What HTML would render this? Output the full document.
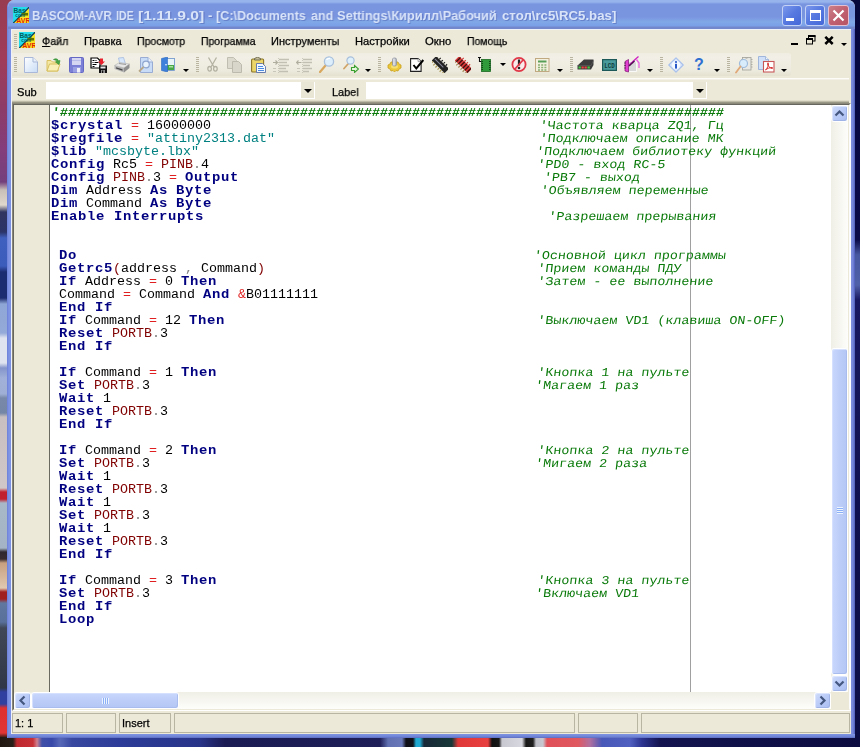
<!DOCTYPE html>
<html><head><meta charset="utf-8"><title>BASCOM-AVR IDE</title>
<style>
html,body{margin:0;padding:0}
body{width:860px;height:747px;position:relative;overflow:hidden;background:#16145a;font-family:"Liberation Sans",sans-serif;font-size:11px;color:#000}
.abs{position:absolute}
#deskL{left:0;top:0;width:18px;height:747px;background:linear-gradient(to bottom,#983c50 0,#a03c5a 60px,#8c3c68 110px,#843e7c 150px,#74407c 182px,#c8c0b8 190px,#e0d8cc 205px,#303460 212px,#2c3468 232px,#4060c0 238px,#3c5cbc 266px,#1c2c70 272px,#1c2c70 298px,#8ea6d6 304px,#94aad8 333px,#dfe3ef 338px,#dfe3ef 363px,#8494ca 368px,#a0b0d8 378px,#9eaed4 394px,#7888a8 398px,#7486a6 413px,#c8c0c0 417px,#d0c8c8 488px,#c02030 492px,#c02030 499px,#a8b8c8 503px,#a4b4c6 548px,#302830 552px,#382c30 559px,#c8a080 563px,#e0c8b0 588px,#a02020 592px,#a02020 599px,#6078a0 603px,#58709a 622px,#404858 628px,#303848 688px,#3040a0 692px,#3040a0 704px,#e03030 708px,#e03434 733px,#201810 738px)}
#deskB{left:0;top:737px;width:860px;height:10px;background:linear-gradient(to right,#201810 0,#282018 13px,#c02830 17px,#c83038 33px,#d08090 37px,#4050a8 42px,#3848a8 52px,#5868b8 60px,#3848a0 72px,#2c3c98 120px,#283488 200px,#1c1c54 225px,#1e1e58 380px,#6070b0 388px,#6878b8 402px,#101018 406px,#101018 413px,#20a8d0 416px,#20a8d0 420px,#182838 424px,#183838 452px,#e03838 458px,#e84040 488px,#101010 492px,#181818 499px,#c8c8d0 502px,#d8d8e0 522px,#181818 526px,#202020 533px,#c0c0c8 536px,#c8c8d0 543px,#e05058 547px,#e05860 578px,#b070a0 590px,#4858b8 602px,#5060c0 630px,#2c3490 642px,#141450 660px,#0c0c40 860px)}
#deskR{left:844px;top:0;width:16px;height:747px;background:linear-gradient(to bottom,#06063c 0,#0a0a48 240px,#4858a0 255px,#5060a8 285px,#181860 300px,#101050 500px,#0c0c44 747px)}
#win{left:7px;top:0;width:847px;height:738px;background:#ece9d8;border-left:1px solid #7285dc;border-radius:7px 7px 0 0;overflow:hidden}
#tb{left:0;top:0;width:847px;height:29px;background:linear-gradient(to bottom,#98b4ec 0,#98b4ec 2px,#7a95e0 4px,#7a95e0 17px,#80a8e6 22px,#7ba0e8 25px,#7ba0e8 26px,#7388cc 27px,#7388cc 28px,#7388cc 29px)}
#bl{left:0;top:29px;width:4px;height:709px;background:linear-gradient(to right,#7a8ee0 0,#8196e6 2px,#7a8ee0 3px,#eef1f9 3px,#eef1f9 4px)}
#br{left:843px;top:29px;width:4px;height:709px;background:linear-gradient(to right,#8090e0,#7484d8 50%,#4c5cb8)}
#bb{left:0;top:734px;width:847px;height:4px;background:linear-gradient(to bottom,#8094e4,#7286d8 60%,#5a6cc0)}
.tw{will-change:transform;top:8px;margin-left:-1px;font:bold 13px/16px "Liberation Sans",sans-serif;color:#d9e4f9;white-space:pre;transform-origin:0 0;text-shadow:1px 1px 0 rgba(70,90,170,.45)}
.cap{top:5px;width:21px;height:21px;border-radius:3px;box-sizing:border-box;border:1px solid #e8eefa}
#client{left:4px;top:29px;width:839px;height:705px;background:#ece9d8}
.mi{-webkit-text-stroke:0.250px #000;will-change:transform;top:5px;white-space:pre;font-size:11px;line-height:13px;transform-origin:0 0}
.ln{position:absolute;left:0;white-space:pre;height:13px;font:12px/13px "Liberation Mono",monospace;letter-spacing:-0.001px;color:#000}
.k{font-weight:bold;color:#000080;font-size:12.500px;line-height:0;letter-spacing:0.599px}
.c{font-style:normal;display:inline-block;transform:skewX(-6deg);transform-origin:0 100%;color:#0a7a0a}
.h{font-weight:bold}
.s{color:#008080}
.r{color:#800000}
.o{color:#e02020}
.g{color:#808080}

.grip{width:3px;background:repeating-linear-gradient(to bottom,#b8b4a0 0,#b8b4a0 1px,transparent 1px,transparent 2px)}
.darr{width:0;height:0;border-left:3px solid transparent;border-right:3px solid transparent;border-top:3px solid #000}
.darr2{width:0;height:0;border-left:4px solid transparent;border-right:4px solid transparent;border-top:4.500px solid #000}
.sbtn{width:17px;height:17px;box-sizing:border-box;border:1px solid #fff;border-radius:3px;background:linear-gradient(135deg,#d0dcfb,#b9cbf7 50%,#a9bdf0);box-shadow:inset -1px -1px 0 #a0b4e8,inset 1px 1px 0 #dbe5fd}
.sthumb{box-sizing:border-box;border:1px solid #fff;border-radius:3px;background:linear-gradient(to bottom,#c9d7fc,#bccdf8 50%,#b4c6f4);box-shadow:inset -1px -1px 0 #a8bcee,inset 1px 1px 0 #d4e0fd}
.stv{background:linear-gradient(to right,#c9d7fc,#bccdf8 50%,#b4c6f4)}
.pane{top:2px;height:20px;box-sizing:border-box;border:1px solid #b9b5a3}
</style></head><body>
<div class="abs" id="deskL"></div><div class="abs" id="deskR"></div><div class="abs" id="deskB"></div>
<div class="abs" id="win">
<div class="abs" id="tb"></div>
<span class="abs tw" id="t1" style="left:24.5px;transform:scaleX(0.901)">BASCOM-AVR</span><span class="abs tw" id="t2" style="left:109.0px;transform:scaleX(0.821)">IDE</span><span class="abs tw" id="t3" style="left:130.5px;transform:scaleX(1.207)">[1.11.9.0]</span><span class="abs tw" id="t4" style="left:201.0px;transform:scaleX(0.991)">-</span><span class="abs tw" id="t5" style="left:208.5px;transform:scaleX(0.971)">[C:\Documents</span><span class="abs tw" id="t6" style="left:303.5px;transform:scaleX(0.964)">and</span><span class="abs tw" id="t7" style="left:330.0px;transform:scaleX(0.988)">Settings\Кирилл\Рабочий</span><span class="abs tw" id="t8" style="left:495.0px;transform:scaleX(1.017)">стол\rc5\RC5.bas]</span>
<!-- title icon -->
<svg class="abs" style="left:5px;top:7px" width="16" height="16" viewBox="0 0 17 17"><rect width="17" height="17" fill="#22dcec"/><polygon points="17,1 17,17 1,17" fill="#f8e424"/><polygon points="17,0 17,1.200 1.200,17 0,17 0,16.400 16.400,0" fill="#1c3a50"/><rect x="9" y="6.300" width="7" height="2.800" fill="#667200"/><text x="0.500" y="6" font-family="Liberation Sans,sans-serif" font-weight="bold" font-size="7" fill="#00605c">Bas</text><text x="2.500" y="10.500" font-family="Liberation Sans,sans-serif" font-weight="bold" font-size="5" fill="#00605c">com</text><text x="3.500" y="16.500" font-family="Liberation Sans,sans-serif" font-weight="bold" font-size="7.500" fill="#e42400">AVR</text></svg>
<!-- caption buttons -->
<div class="abs cap" style="left:774px;width:20px;border-color:#c4d2f6;background:linear-gradient(135deg,#7c98ec,#5578e0 50%,#4468d8)"><div class="abs" style="left:3px;top:12px;width:8px;height:3px;background:#fff"></div></div>
<div class="abs cap" style="left:797px;width:20px;border-color:#c4d2f6;background:linear-gradient(135deg,#7c98ec,#5578e0 50%,#4468d8)"><div class="abs" style="left:4px;top:4px;width:11px;height:11px;box-sizing:border-box;border:1px solid #fff;border-top-width:3px"></div></div>
<div class="abs cap" style="left:820px;border-color:#e4c0d0;background:linear-gradient(135deg,#cc8088,#c06070 50%,#b85464)"><svg class="abs" style="left:3px;top:3px" width="13" height="13" viewBox="0 0 13 13"><path d="M1.5 1.5L11.5 11.5M11.5 1.5L1.5 11.5" stroke="#fff" stroke-width="2.2"/></svg></div>
<div class="abs" id="bl"></div><div class="abs" id="br"></div><div class="abs" id="bb"></div>
<div class="abs" id="client">
<!-- white line under title -->
<div class="abs" style="left:0;top:0;width:839px;height:1px;background:#f0f2fa"></div>
<!-- menu bar : page y30-53 => client y1-24 -->
<div class="abs" id="menu" style="left:0;top:1px;width:839px;height:24px;background:#ece9d8">
 <div class="abs grip" style="left:2px;top:4px;height:15px"></div>
 <svg class="abs" style="left:7px;top:2px" width="16" height="16" viewBox="0 0 17 17"><rect width="17" height="17" fill="#22dcec"/><polygon points="17,1 17,17 1,17" fill="#f8e424"/><polygon points="17,0 17,1.200 1.200,17 0,17 0,16.400 16.400,0" fill="#1c3a50"/><rect x="9" y="6.300" width="7" height="2.800" fill="#667200"/><text x="0.500" y="6" font-family="Liberation Sans,sans-serif" font-weight="bold" font-size="7" fill="#00605c">Bas</text><text x="2.500" y="10.500" font-family="Liberation Sans,sans-serif" font-weight="bold" font-size="5" fill="#00605c">com</text><text x="3.500" y="16.500" font-family="Liberation Sans,sans-serif" font-weight="bold" font-size="7.500" fill="#e42400">AVR</text></svg>
 <span class="abs mi" id="m1" style="left:30.0px;transform:scaleX(0.972)"><u>Ф</u>айл</span>
 <span class="abs mi" id="m2" style="left:71.8px;transform:scaleX(1.017)">Правка</span>
 <span class="abs mi" id="m3" style="left:125.0px;transform:scaleX(0.961)">Просмотр</span>
 <span class="abs mi" id="m4" style="left:189.3px;transform:scaleX(0.946)">Программа</span>
 <span class="abs mi" id="m5" style="left:259.3px;transform:scaleX(0.996)">Инструменты</span>
 <span class="abs mi" id="m6" style="left:343.1px;transform:scaleX(1.016)">Настройки</span>
 <span class="abs mi" id="m7" style="left:413.3px;transform:scaleX(1.029)">Окно</span>
 <span class="abs mi" id="m8" style="left:455.0px;transform:scaleX(0.948)">Помощь</span>
 <!-- mdi buttons -->
 <div class="abs" style="left:779px;top:12.500px;width:7px;height:2.500px;background:#000"></div>
 <svg class="abs" style="left:794px;top:5px" width="10" height="10" viewBox="0 0 10 10"><rect x="2.500" y="1" width="6.500" height="5" fill="none" stroke="#000" stroke-width="1"/><rect x="2" y="0" width="7.500" height="2" fill="#000"/><rect x="0.500" y="4" width="6" height="5" fill="#ece9d8" stroke="#000" stroke-width="1"/><rect x="0" y="3" width="7" height="2" fill="#000"/></svg>
 <svg class="abs" style="left:812px;top:5.500px" width="10" height="9" viewBox="0 0 10 9"><path d="M1.300 0.800L8.700 8M8.700 0.800L1.300 8" stroke="#000" stroke-width="2.500"/></svg>
 <div class="abs darr" style="left:829px;top:13px"></div>
</div>
<!-- toolbar : page y54-79 => client y25-50 ; icons top page 57 => rel 3 -->
<div class="abs" id="tool" style="left:0;top:25px;width:839px;height:25px;background:#ece9d8">
<div class="abs" style="left:0;top:-1px;width:779px;height:23px;background:linear-gradient(to bottom,#f0eee3,#f2f0e6 20%,#edebde 75%,#e4e1d0);border-radius:0 3px 3px 0"></div>
<div class="abs grip" style="left:2px;top:3px;height:15px"></div>
<!-- new doc  page x24 -->
<svg class="abs" style="left:12px;top:3px" width="14" height="16" viewBox="0 0 14 16"><defs><linearGradient id="gd" x1="0" y1="0" x2="1" y2="1"><stop offset="0" stop-color="#fff"/><stop offset="1" stop-color="#c8dcf6"/></linearGradient></defs><path d="M0.5 0.5h8.5l4.5 4.5v10.500h-13z" fill="url(#gd)" stroke="#a9b8d8"/><path d="M9 0.500v4.500h4.500" fill="#e8f0fc" stroke="#a9b8d8"/></svg>
<!-- open folder page x46 -->
<svg class="abs" style="left:34px;top:3px" width="15" height="16" viewBox="0 0 15 16"><path d="M1 3.500h4l1.500 1.500h5.500v9h-11z" fill="#f4e8a4" stroke="#d8c060"/><path d="M1 14l2.500-7h10.500l-2.500 7z" fill="#f8f0b8" stroke="#d8c060"/><path d="M7.500 2.500c2.500-1.500 4.500-0.500 5 1.500l1.500-0.500-1 4-3.500-2.500 1.500-0.500c-0.500-1-1.500-1.500-3.500-2z" fill="#48a848" stroke="#2a8a2a" stroke-width=".6"/></svg>
<!-- save floppy page x69 -->
<svg class="abs" style="left:57px;top:3px" width="15" height="16" viewBox="0 0 15 16"><path d="M0.500 1.500q0-1 1-1h12q1 0 1 1v13q0 1-1 1h-12q-1 0-1-1z" fill="#7b7fd6" stroke="#6468c4"/><rect x="3" y="1" width="9" height="7" fill="#d4d6f2"/><rect x="3" y="3" width="9" height="1" fill="#b8bce8"/><rect x="4" y="10" width="8" height="5.500" fill="#9a9ee2"/><rect x="8" y="11" width="3" height="4.500" fill="#f0f0fa"/></svg>
<!-- save as page x90.5 -->
<svg class="abs" style="left:78px;top:3px" width="17" height="16" viewBox="0 0 17 16"><path d="M1 1h6.500l2.500 2.500v7.500h-9z" fill="#fff" stroke="#000" stroke-width="1.200"/><path d="M2.500 3.500h2M5.500 3.500h1M2.500 5.500h1M4.500 5.500h4M2.500 7.500h4M2.500 9.500h2" stroke="#000" stroke-width="1"/><path d="M10 1.500h3v3h2l-3.500 3.500-3.500-3.500h2z" fill="#e8202c"/><rect x="9" y="8.500" width="8" height="7.500" fill="#111"/><rect x="10.500" y="9.500" width="5" height="2" fill="#e8e8e8"/><rect x="11" y="13" width="4" height="3" fill="#909090"/><rect x="12" y="13.500" width="1.200" height="2.500" fill="#111"/></svg>
<!-- printer page x114 -->
<svg class="abs" style="left:102px;top:3px" width="16" height="16" viewBox="0 0 16 16"><path d="M4.500 1l5-0.500 2 6.500-5.500 0.500z" fill="#d6e6fb" stroke="#a4badf" stroke-width=".8"/><path d="M0.500 8.500l5-3 10 1.500-5.500 4z" fill="#e6e6e6" stroke="#b0b0b0" stroke-width=".6"/><path d="M0.500 8.500l9.500 2.500v4.500l-9.500-3.500z" fill="#b4b4b4"/><path d="M10 11l5.500-4v4l-5.500 4.500z" fill="#8e8e8e"/><path d="M2 10.300l6.500 1.900v1.600l-6.500-2.200z" fill="#4c4c4c"/><path d="M5 6.500l7 1" stroke="#9a9a9a" stroke-width="1"/></svg>
<!-- preview page x138 -->
<svg class="abs" style="left:126px;top:3px" width="15" height="16" viewBox="0 0 15 16"><path d="M2.500 0.500h7.500l4.500 4.500v10.500h-12z" fill="#c8dcf8" stroke="#98acd4"/><path d="M10 0.500v4.500h4.500" fill="#e8f0fc" stroke="#98acd4"/><circle cx="8" cy="7.500" r="3.300" fill="#e8f2fc" stroke="#8ea4cc" stroke-width="1.200"/><path d="M5.500 10l-4.500 4.500" stroke="#b8a888" stroke-width="1.800"/></svg>
<!-- exit door page x161 -->
<svg class="abs" style="left:149px;top:3px" width="14" height="15" viewBox="0 0 14 15"><rect x="5" y="1.500" width="8.500" height="12" fill="#e8f4f8" stroke="#6890c8" stroke-width=".8"/><rect x="5.500" y="8" width="7.500" height="5" fill="#48a848"/><rect x="8" y="9" width="4" height="1.500" fill="#a8e0a0"/><path d="M0.500 1.500l6-1.500v15l-6-1.500z" fill="#3c80dc" stroke="#2c68c0" stroke-width=".6"/><circle cx="5" cy="7.800" r=".8" fill="#fff"/></svg>
<div class="abs darr" style="left:171px;top:15px"></div>
<div class="abs grip" style="left:184px;top:3px;height:15px"></div>
<!-- scissors gray page x207.5 -->
<svg class="abs" style="left:195px;top:3px" width="11" height="15" viewBox="0 0 11 15"><path d="M1.500 0.500l5.500 9.500M9.500 0.500l-5.500 9.500" stroke="#b4b2a2" stroke-width="1.300" fill="none"/><ellipse cx="2.600" cy="11.800" rx="1.800" ry="2.300" fill="none" stroke="#b4b2a2" stroke-width="1.300"/><ellipse cx="8.400" cy="11.800" rx="1.800" ry="2.300" fill="none" stroke="#b4b2a2" stroke-width="1.300"/></svg>
<!-- copy gray page x227.5 -->
<svg class="abs" style="left:215px;top:3px" width="15" height="16" viewBox="0 0 15 16"><path d="M0.500 0.500h6l3 3v8h-9z" fill="#dcdace" stroke="#c0beb0"/><path d="M5.500 4.500h6l3 3v8h-9z" fill="#d8d6ca" stroke="#bcbaac"/></svg>
<!-- paste page x251 -->
<svg class="abs" style="left:239px;top:3px" width="15" height="16" viewBox="0 0 15 16"><rect x="0.600" y="2" width="12" height="13" rx="1" fill="#ecd66a" stroke="#8a7428" stroke-width="1.100"/><path d="M3.500 3v-1.500q3-2.500 6 0v1.500z" fill="#c8c0a0" stroke="#6a6448" stroke-width=".9"/><path d="M5.500 6.500h6l3 3v6h-9z" fill="#f4f8ff" stroke="#5a70a8" stroke-width=".9"/><path d="M7 9.500h5M7 11.500h6M7 13.500h6" stroke="#4a8ae0" stroke-width="1"/></svg>
<!-- indent page x273.5 gray -->
<svg class="abs" style="left:261px;top:4px" width="17" height="15" viewBox="0 0 17 15"><path d="M6 1.500h10M6 4.500h8M6 7.500h10M6 10.500h7M6 13.500h9" stroke="#c2c0b2" stroke-width="1.400"/><path d="M5.500 0v15" stroke="#c2c0b2" stroke-width=".8" stroke-dasharray="1 1"/><path d="M0 4.500h4M2.500 2.500l2 2-2 2" stroke="#b0ae9e" stroke-width="1.200" fill="none"/><path d="M0 10.500h3M0 13.500h3" stroke="#c8c6b8" stroke-width="1.200"/></svg>
<!-- unindent page x296 gray -->
<svg class="abs" style="left:284px;top:4px" width="17" height="15" viewBox="0 0 17 15"><path d="M7 1.500h9M7 4.500h9M7 7.500h7M7 10.500h9M7 13.500h6" stroke="#c2c0b2" stroke-width="1.400"/><path d="M6.500 0v15" stroke="#c2c0b2" stroke-width=".8" stroke-dasharray="1 1"/><path d="M0.500 4.500h5M2.500 2.500l-2 2 2 2" stroke="#b0ae9e" stroke-width="1.200" fill="none"/><path d="M1 10.500h3M1 13.500h3" stroke="#c8c6b8" stroke-width="1.200"/></svg>
<!-- find page x319 -->
<svg class="abs" style="left:307px;top:2px" width="16" height="17" viewBox="0 0 16 17"><path d="M6.500 9.500l-5.500 6.500" stroke="#d8a860" stroke-width="2.200" stroke-linecap="round"/><circle cx="10" cy="5.500" r="4.600" fill="#dceefb" stroke="#a8c0dc" stroke-width="1.300"/><path d="M7.500 4q1.500-2 3.500-1.500" stroke="#fff" stroke-width="1.200" fill="none"/></svg>
<!-- find next page x344 -->
<svg class="abs" style="left:331px;top:2px" width="16" height="17" viewBox="0 0 16 17"><path d="M5 8l-4 4.500" stroke="#d0a468" stroke-width="1.800" stroke-linecap="round"/><circle cx="7.500" cy="4.500" r="3.600" fill="#e0f0fb" stroke="#a8c0dc" stroke-width="1.200"/><path d="M8.500 11.500h3v-2l4 3.500-4 3.500v-2h-3z" fill="#e8f8e0" stroke="#3aa030" stroke-width="1.100"/></svg>
<div class="abs darr" style="left:353px;top:15px"></div>
<div class="abs grip" style="left:366px;top:3px;height:15px"></div>
<!-- gear page x387 -->
<svg class="abs" style="left:375px;top:3px" width="15" height="16" viewBox="0 0 15 16"><path d="M1 8l2-1 1-2h7l1 2 2 1v3l-2 1-1 2-2-0.500-1.500 1.500-1.500-1.500-2 0.500-1-2-2-1z" fill="#ecc838" stroke="#c8a020" stroke-width=".8"/><ellipse cx="7.500" cy="9.500" rx="3.500" ry="2" fill="#f8e070"/><rect x="5.500" y="1" width="4" height="8" rx="1.500" fill="#b8bcc4" stroke="#888c98" stroke-width=".7"/><rect x="6.300" y="1.500" width="1.300" height="7" fill="#e8eaf0"/></svg>
<!-- check doc page x410 -->
<svg class="abs" style="left:398px;top:4px" width="15" height="14" viewBox="0 0 15 14"><path d="M0.600 0.600h7.500l3 3v9.800h-10.500z" fill="#fff" stroke="#222" stroke-width="1.100"/><path d="M8 0.600v3h3" fill="#e8e8f0" stroke="#888" stroke-width=".7"/><path d="M3.500 7l2.800 3.500l7-8.500" fill="none" stroke="#000" stroke-width="2"/></svg>
<!-- black chip page x432 -->
<svg class="abs" style="left:420px;top:3px" width="16" height="16" viewBox="0 0 16 16"><g transform="rotate(45 8 8)"><rect x="-1" y="4.500" width="18" height="6" fill="#222"/><path d="M0.500 2.500v2M3.500 2.500v2M6.500 2.500v2M9.500 2.500v2M12.500 2.500v2M15.500 2.500v2" stroke="#222" stroke-width="1.200"/><path d="M0.500 10.500v2.500M3.500 10.500v2.500M6.500 10.500v2.500M9.500 10.500v2.500M12.500 10.500v2.500M15.500 10.500v2.500" stroke="#a89858" stroke-width="1.200"/><rect x="0" y="6.800" width="12" height="1" fill="#8888a0"/></g></svg>
<!-- red chip page x455.5 -->
<svg class="abs" style="left:443px;top:3px" width="16" height="16" viewBox="0 0 16 16"><g transform="rotate(45 8 8)"><rect x="-1" y="4.500" width="18" height="6" fill="#d83838"/><path d="M1 4.500v6M4 4.500v6M7 4.500v6M10 4.500v6M13 4.500v6M16 4.500v6" stroke="#401010" stroke-width="1.300"/><path d="M0.500 2.500v2M3.500 2.500v2M6.500 2.500v2M9.500 2.500v2M12.500 2.500v2M15.500 2.500v2" stroke="#d83838" stroke-width="1.200"/><path d="M0.500 10.500v2.500M3.500 10.500v2.500M6.500 10.500v2.500M9.500 10.500v2.500M12.500 10.500v2.500M15.500 10.500v2.500" stroke="#a88858" stroke-width="1.200"/></g></svg>
<!-- green chip page x478 -->
<svg class="abs" style="left:466px;top:3px" width="13" height="15" viewBox="0 0 13 15"><path d="M0 0.500h3M1.500 0.500v4h2" stroke="#111" stroke-width="1.100" fill="none"/><rect x="3.500" y="2.500" width="9" height="12" fill="#2f9a3a" stroke="#1c6a24" stroke-width=".8"/><path d="M3.500 4.500h1.500M3.500 6.500h1.500M3.500 8.500h1.500M3.500 10.500h1.500M3.500 12.500h1.500M11 4.500h1.500M11 6.500h1.500M11 8.500h1.500M11 10.500h1.500M11 12.500h1.500" stroke="#0c3c10" stroke-width=".9"/></svg>
<div class="abs darr" style="left:488px;top:9px"></div>
<!-- stop page x511 -->
<svg class="abs" style="left:499px;top:2px" width="16" height="17" viewBox="0 0 16 17"><circle cx="8" cy="8.500" r="6.600" fill="#fbeaea" stroke="#e03848" stroke-width="1.800"/><path d="M8 3.500v6" stroke="#222" stroke-width="2.200"/><circle cx="8" cy="12" r="1.300" fill="#222"/><path d="M12.500 3.500l-9 10" stroke="#e03848" stroke-width="1.800"/></svg>
<!-- calculator page x535 -->
<svg class="abs" style="left:523px;top:4px" width="15" height="14" viewBox="0 0 15 14"><rect x="0.500" y="0.500" width="13.500" height="13" fill="#f4f0e0" stroke="#c0a880" stroke-width="1"/><rect x="3" y="2.500" width="8.500" height="2" fill="#58a058"/><path d="M3 7h8.500M3 9.500h8.500M3 12h8.500" stroke="#88b070" stroke-width="1.600" stroke-dasharray="2 1.200"/></svg>
<div class="abs darr" style="left:545px;top:15px"></div>
<div class="abs grip" style="left:558px;top:3px;height:15px"></div>
<!-- modem page x577.5 y59-69 -->
<svg class="abs" style="left:565px;top:5px" width="17" height="11" viewBox="0 0 17 11"><path d="M0.500 6.500l6.500-6h9.500v5.500l-2.500 4.500h-13.500z" fill="#3c3c3c"/><path d="M0.500 6.500h13.500l2.500-5" stroke="#606060" stroke-width=".6" fill="none"/><rect x="1.500" y="7.500" width="2.300" height="2" fill="#40d040"/><rect x="4.500" y="7.500" width="2.300" height="2" fill="#f04040"/><rect x="7.500" y="7.500" width="2.300" height="2" fill="#f04040"/><rect x="10.500" y="7.500" width="2.300" height="2" fill="#40d040"/></svg>
<!-- LCD page x602 y59-71 -->
<svg class="abs" style="left:590px;top:5px" width="15" height="12" viewBox="0 0 15 12"><rect x="0.600" y="0.600" width="13.800" height="10.800" fill="#4a9c9c" stroke="#1c5858" stroke-width="1.200"/><text x="2.200" y="8.800" font-family="Liberation Mono,monospace" font-weight="bold" font-size="6.500" fill="#103c3c" textLength="10.500" lengthAdjust="spacingAndGlyphs">LCD</text></svg>
<!-- magenta tool page x624 -->
<svg class="abs" style="left:612px;top:2px" width="17" height="17" viewBox="0 0 17 17"><path d="M3 5l9.500 1v9.500h-9.500z" fill="#d8d8d8" stroke="#fff" stroke-width=".8"/><path d="M1 5.500l3.500-2v12.500l-3.500-1z" fill="#e040d0" stroke="#801070" stroke-width=".7"/><path d="M0.500 7h1M0.500 9.500h1M0.500 12h1" stroke="#222" stroke-width="1.200"/><path d="M4.500 9.500l5.500-5 4.500-4" stroke="#d020c0" stroke-width="1.300"/><path d="M5 10l5.500-5" stroke="#501050" stroke-width="1.500"/><path d="M12.500 3.500l2.500 3.500v5" stroke="#e860e0" stroke-width="1.300" fill="none"/></svg>
<div class="abs darr" style="left:635px;top:15px"></div>
<div class="abs grip" style="left:648px;top:3px;height:15px"></div>
<!-- info page x668.5 -->
<svg class="abs" style="left:656px;top:3px" width="16" height="16" viewBox="0 0 16 16"><path d="M8 0.800l7.200 7.200-7.200 7.200-7.200-7.200z" fill="#dbe7fb" stroke="#a8c0ec" stroke-width="1.200" stroke-linejoin="round"/><circle cx="8" cy="8" r="4.200" fill="#f4f8ff"/><circle cx="8" cy="5" r="1.100" fill="#2858c8"/><rect x="7" y="6.800" width="2" height="4.800" fill="#2858c8"/></svg>
<!-- ? page x694.5 -->
<div class="abs" style="left:682px;top:2px;font:bold 16px/18px 'Liberation Sans',sans-serif;color:#2f6fd2">?</div>
<div class="abs darr" style="left:702px;top:15px"></div>
<div class="abs grip" style="left:715px;top:3px;height:15px"></div>
<!-- chip search page x735 -->
<svg class="abs" style="left:723px;top:2px" width="18" height="18" viewBox="0 0 18 18"><rect x="7.500" y="1.500" width="8.500" height="12.500" fill="#e8e8e4" stroke="#a8a8a0" stroke-width=".9"/><path d="M16 3.500h1.500M16 6h1.500M16 8.500h1.500M16 11h1.500M6 3.500h1.500M10 1.500q1.500 1.500 3 0" stroke="#a8a8a0" stroke-width=".9" fill="none"/><circle cx="8.500" cy="7.500" r="4" fill="#d8ecfb" stroke="#a0bcdc" stroke-width="1.200"/><path d="M5.500 10.500l-4.500 6" stroke="#e0a878" stroke-width="1.800" stroke-linecap="round"/></svg>
<!-- pdf page x758 -->
<svg class="abs" style="left:746px;top:2px" width="17" height="17" viewBox="0 0 17 17"><path d="M0.500 0.500h7l3 3v10h-10z" fill="#cfe0f8" stroke="#98b0d8" stroke-width=".9"/><path d="M7.500 0.500v3h3" fill="#eef4fc" stroke="#98b0d8" stroke-width=".8"/><rect x="5.500" y="5.500" width="10.500" height="10.500" fill="#fff" stroke="#c85858" stroke-width="1.100"/><path d="M7.500 14c2-2 3-4.500 3-6.500c0-1-1-1-1 0c0 2 2 4.500 4.500 5c1 0 1-1 0-1c-2 0-5 1-6.500 2.500z" fill="none" stroke="#d83030" stroke-width="1"/></svg>
<div class="abs darr" style="left:769px;top:15px"></div>
</div>

<!-- sub/label row : page y78-103 => client y49-74 -->
<div class="abs" id="subrow" style="left:0;top:49px;width:837px;height:25px;background:linear-gradient(to bottom,#fdfcf9 0,#fdfcf9 1px,#f3f1e7 1px,#f3f1e7 2px,#ece9d8 2px,#ece9d8 22px,#d4d0bc 23px,#a8a594 24px,#8a8878 25px)">
 <span class="abs" id="lsub" style="-webkit-text-stroke:0.250px #000;will-change:transform;left:5px;top:8px;font-size:11px;line-height:13px;transform-origin:0 0;transform:scaleX(1.01)">Sub</span>
 <div class="abs" style="left:34px;top:4px;width:269px;height:17px;background:#fff"></div>
 <div class="abs" style="left:289px;top:4px;width:13px;height:16px;background:#e9e6d6"><div class="abs darr2" style="left:2.500px;top:6.500px"></div></div>
 <span class="abs" id="llab" style="-webkit-text-stroke:0.250px #000;will-change:transform;left:320px;top:8px;font-size:11px;line-height:13px;transform-origin:0 0;transform:scaleX(0.99)">Label</span>
 <div class="abs" style="left:354px;top:4px;width:341px;height:17px;background:#fff"></div>
 <div class="abs" style="left:681px;top:4px;width:13px;height:16px;background:#e9e6d6"><div class="abs darr2" style="left:2.500px;top:6.500px"></div></div>
</div>
<!-- editor : page x12-851 y103-711 => client x0-839 y74-682 -->
<div class="abs" id="ed" style="left:0;top:74px;width:839px;height:608px;box-sizing:border-box;border:1px solid #8a8878;border-right-color:#fff;border-bottom-color:#fff;background:#ece9d8">
 <div class="abs" style="left:0;top:0;width:837px;height:606px;box-sizing:border-box;border:1px solid #66665e;border-right-color:#fbfbfd;border-bottom-color:#ece9d8"></div>
 <!-- gutter page x14-49 ; inner origin = page (13,104) -->
 <div class="abs" style="left:1px;top:1px;width:35px;height:587px;background:#ece9d8"></div>
 <div class="abs" style="left:36px;top:1px;width:1px;height:587px;background:#6a6a60"></div>
 <div class="abs" id="text" style="left:37px;top:1px;width:781px;height:587px;background:#fff;overflow:hidden">
  <div class="abs" style="left:640px;top:0;width:1px;height:587px;background:#a0a0a0"></div>
  <div class="abs" id="code" style="left:1px;top:2px;will-change:transform;transform:scaleX(1.11094);transform-origin:0 0">
<div class="ln" style="top:0px"><span class="c h">'###################################################################################</span></div>
<div class="ln" style="top:13px"><span class="k">$crystal</span> <span class="o">=</span> 16000000                                         <span class="c">'Частота кварца ZQ1, Гц</span></div>
<div class="ln" style="top:26px"><span class="k">$regfile</span> <span class="o">=</span> <span class="s">"attiny2313.dat"</span>                                 <span class="c">'Подключаем описание МК</span></div>
<div class="ln" style="top:39px"><span class="k">$lib</span> <span class="s">"mcsbyte.lbx"</span>                                          <span class="c">'Подключаем библиотеку функций</span></div>
<div class="ln" style="top:52px"><span class="k">Config</span> Rc5 <span class="o">=</span> <span class="r">PINB</span><span class="g">.</span>4                                         <span class="c">'PD0 - вход RC-5</span></div>
<div class="ln" style="top:65px"><span class="k">Config</span> <span class="r">PINB</span><span class="g">.</span>3 <span class="o">=</span> <span class="k">Output</span>                                      <span class="c">'PB7 - выход</span></div>
<div class="ln" style="top:78px"><span class="k">Dim</span> Address <span class="k">As</span> <span class="k">Byte</span>                                         <span class="c">'Объявляем переменные</span></div>
<div class="ln" style="top:91px"><span class="k">Dim</span> Command <span class="k">As</span> <span class="k">Byte</span></div>
<div class="ln" style="top:104px"><span class="k">Enable Interrupts</span>                                           <span class="c">'Разрешаем прерывания</span></div>
<div class="ln" style="top:143px"> <span class="k">Do</span>                                                         <span class="c">'Основной цикл программы</span></div>
<div class="ln" style="top:156px"> <span class="k">Getrc5</span><span class="r">(</span>address <span class="g">,</span> Command<span class="r">)</span>                                  <span class="c">'Прием команды ПДУ</span></div>
<div class="ln" style="top:169px"> <span class="k">If</span> Address <span class="o">=</span> 0 <span class="k">Then</span>                                        <span class="c">'Затем - ее выполнение</span></div>
<div class="ln" style="top:182px"> Command <span class="o">=</span> Command <span class="k">And</span> <span class="o">&amp;</span>B01111111</div>
<div class="ln" style="top:195px"> <span class="k">End If</span></div>
<div class="ln" style="top:208px"> <span class="k">If</span> Command <span class="o">=</span> 12 <span class="k">Then</span>                                       <span class="c">'Выключаем VD1 (клавиша ON-OFF)</span></div>
<div class="ln" style="top:221px"> <span class="k">Reset</span> <span class="r">PORTB</span><span class="g">.</span>3</div>
<div class="ln" style="top:234px"> <span class="k">End If</span></div>
<div class="ln" style="top:260px"> <span class="k">If</span> Command <span class="o">=</span> 1 <span class="k">Then</span>                                        <span class="c">'Кнопка 1 на пульте</span></div>
<div class="ln" style="top:273px"> <span class="k">Set</span> <span class="r">PORTB</span><span class="g">.</span>3                                                <span class="c">'Магаем 1 раз</span></div>
<div class="ln" style="top:286px"> <span class="k">Wait</span> 1</div>
<div class="ln" style="top:299px"> <span class="k">Reset</span> <span class="r">PORTB</span><span class="g">.</span>3</div>
<div class="ln" style="top:312px"> <span class="k">End If</span></div>
<div class="ln" style="top:338px"> <span class="k">If</span> Command <span class="o">=</span> 2 <span class="k">Then</span>                                        <span class="c">'Кнопка 2 на пульте</span></div>
<div class="ln" style="top:351px"> <span class="k">Set</span> <span class="r">PORTB</span><span class="g">.</span>3                                                <span class="c">'Мигаем 2 раза</span></div>
<div class="ln" style="top:364px"> <span class="k">Wait</span> 1</div>
<div class="ln" style="top:377px"> <span class="k">Reset</span> <span class="r">PORTB</span><span class="g">.</span>3</div>
<div class="ln" style="top:390px"> <span class="k">Wait</span> 1</div>
<div class="ln" style="top:403px"> <span class="k">Set</span> <span class="r">PORTB</span><span class="g">.</span>3</div>
<div class="ln" style="top:416px"> <span class="k">Wait</span> 1</div>
<div class="ln" style="top:429px"> <span class="k">Reset</span> <span class="r">PORTB</span><span class="g">.</span>3</div>
<div class="ln" style="top:442px"> <span class="k">End If</span></div>
<div class="ln" style="top:468px"> <span class="k">If</span> Command <span class="o">=</span> 3 <span class="k">Then</span>                                        <span class="c">'Кнопка 3 на пульте</span></div>
<div class="ln" style="top:481px"> <span class="k">Set</span> <span class="r">PORTB</span><span class="g">.</span>3                                                <span class="c">'Включаем VD1</span></div>
<div class="ln" style="top:494px"> <span class="k">End If</span></div>
<div class="ln" style="top:507px"> <span class="k">Loop</span></div>
  </div>
 </div>
 <!-- v scrollbar page x832-849, y105-692 -->
 <div class="abs" style="left:818px;top:1px;width:17px;height:587px;background:linear-gradient(to right,#f0efe6,#fdfdfb)">
  <div class="abs sbtn" style="left:0;top:0"><svg width="15" height="15" viewBox="0 0 15 15"><path d="M3.5 9.5L7.5 5.5L11.5 9.5" fill="none" stroke="#44577f" stroke-width="2.200"/></svg></div>
  <div class="abs sthumb stv" style="left:0;top:243px;width:17px;height:327px"><div class="abs" style="left:5px;top:158px;width:6px;height:7px;background:repeating-linear-gradient(to bottom,#eef4fe 0,#eef4fe 1px,#8cb0f8 1px,#8cb0f8 2px)"></div></div>
  <div class="abs sbtn" style="left:0;top:570px"><svg width="15" height="15" viewBox="0 0 15 15"><path d="M3.5 5.5L7.5 9.5L11.5 5.5" fill="none" stroke="#44577f" stroke-width="2.200"/></svg></div>
 </div>
 <!-- h scrollbar page y692-709 -->
 <div class="abs" style="left:1px;top:588px;width:817px;height:17px;background:linear-gradient(to bottom,#f0efe6,#fdfdfb)">
  <div class="abs sbtn" style="left:0;top:0"><svg width="15" height="15" viewBox="0 0 15 15"><path d="M9.5 3.5L5.5 7.5L9.5 11.5" fill="none" stroke="#44577f" stroke-width="2.200"/></svg></div>
  <div class="abs sthumb" style="left:17px;top:0;width:148px;height:17px"><div class="abs" style="left:70px;top:5px;width:7px;height:6px;background:repeating-linear-gradient(to right,#eef4fe 0,#eef4fe 1px,#8cb0f8 1px,#8cb0f8 2px)"></div></div>
  <div class="abs sbtn" style="left:800px;top:0"><svg width="15" height="15" viewBox="0 0 15 15"><path d="M5.5 3.5L9.5 7.5L5.5 11.5" fill="none" stroke="#44577f" stroke-width="2.200"/></svg></div>
 </div>
</div>
<!-- status bar page y711-734 => client y682-705 -->
<div class="abs" id="status" style="left:0;top:682px;width:839px;height:23px;background:#ece9d8">
 <div class="abs pane" style="left:0;width:51px"><span class="abs" id="s1" style="-webkit-text-stroke:0.250px #000;will-change:transform;left:2px;top:3px;line-height:13px">1: 1</span></div>
 <div class="abs pane" style="left:53.500px;width:50.500px"></div>
 <div class="abs pane" style="left:107px;width:51.500px"><span class="abs" id="s2" style="-webkit-text-stroke:0.250px #000;will-change:transform;left:1.500px;top:3px;line-height:13px">Insert</span></div>
 <div class="abs pane" style="left:161.500px;width:401px"></div>
 <div class="abs pane" style="left:565.500px;width:60.500px"></div>
 <div class="abs pane" style="left:629px;width:209px"></div>
</div>
</div></div>
</body></html>
